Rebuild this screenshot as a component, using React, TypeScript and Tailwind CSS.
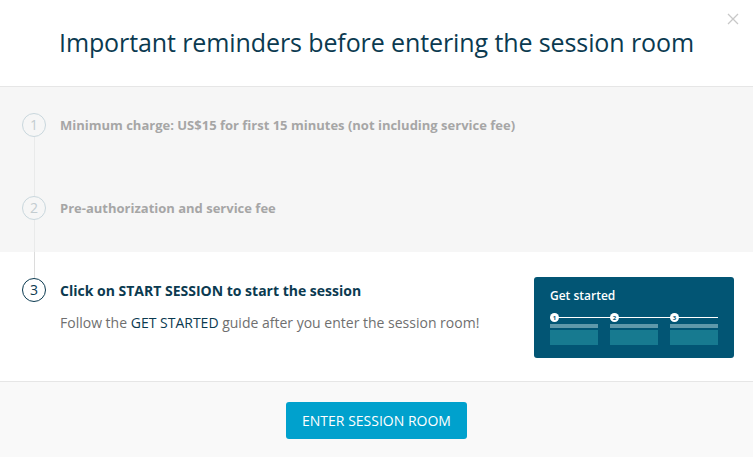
import React from "react";

const font = { fontFamily: '"Open Sans", "Noto Sans", sans-serif' };

function StepCircle({ n, active }: { n: number; active?: boolean }) {
  return (
    <div
      className={
        "flex h-[24px] w-[24px] shrink-0 items-center justify-center rounded-full border text-[14px] leading-none " +
        (active
          ? "border-[#0b3a50] text-[#0b3a50]"
          : "border-[#c9d7dd] text-[#c3ccd0]")
      }
    >
      {n}
    </div>
  );
}

function GuideCard() {
  return (
    <div className="w-[200px] rounded-[3px] bg-[#025574] px-[16px] pt-[10px] pb-[13px]">
      <div className="text-[12px] font-semibold text-white">Get started</div>
      <div className="relative mt-[8px] flex gap-[12px]">
        <div className="absolute left-[4px] right-0 top-[4px] h-px bg-white" />
        {[1, 2, 3].map((n) => (
          <div key={n} className="relative w-[48px]">
            <div className="flex h-[9px] w-[9px] items-center justify-center rounded-full bg-white text-[6px] font-bold leading-none text-[#025574]">
              {n}
            </div>
            <div className="mt-[2px] h-[4px] bg-[#5f98aa]" />
            <div className="mt-[2px] h-[15px] bg-[#177a90]" />
          </div>
        ))}
      </div>
    </div>
  );
}

export default function App() {
  return (
    <div className="h-[457px] w-[753px] bg-white" style={font}>
      <div className="relative flex h-[87px] items-center justify-center border-b border-[#e6e6e6]">
        <h1 className="pb-[1px] text-[25px] tracking-[-0.1px] text-[#0b3a50]">
          Important reminders before entering the session room
        </h1>
        <svg
          className="absolute right-[14px] top-[13px]"
          width="12"
          height="12"
          viewBox="0 0 12 12"
        >
          <path d="M1 1L11 11M11 1L1 11" stroke="#c8c8c8" strokeWidth="1.3" />
        </svg>
      </div>

      <div className="bg-[#f6f6f6] pl-[22px] pt-[26px]">
        <div className="flex h-[83px]">
          <div className="flex w-[24px] flex-col items-center">
            <StepCircle n={1} />
            <div className="w-px flex-1 bg-[#e9eaea]" />
          </div>
          <div className="ml-[14px] mt-[3px] text-[13px] font-bold text-[#a6a6a6]">
            Minimum charge: US$15 for first 15 minutes (not including service fee)
          </div>
        </div>
        <div className="flex h-[56px]">
          <div className="flex w-[24px] flex-col items-center">
            <StepCircle n={2} />
            <div className="w-px flex-1 bg-[#e9eaea]" />
          </div>
          <div className="ml-[14px] mt-[3px] text-[13px] font-bold text-[#a6a6a6]">
            Pre-authorization and service fee
          </div>
        </div>
      </div>

      <div className="flex h-[129px] pl-[22px] pr-[19px]">
        <div className="flex w-[24px] flex-col items-center">
          <div className="h-[26px] w-px bg-[#dcdcdc]" />
          <StepCircle n={3} active />
        </div>
        <div className="ml-[14px] flex-1 pt-[28px]">
          <div className="text-[14px] font-bold text-[#0b3a50]">
            Click on START SESSION to start the session
          </div>
          <div className="mt-[11px] text-[14px] text-[#6f6f6f]">
            Follow the <span className="text-[#0b3a50]">GET STARTED</span> guide
            after you enter the session room!
          </div>
        </div>
        <div className="pt-[25px]">
          <GuideCard />
        </div>
      </div>

      <div className="flex h-[76px] items-start justify-center border-t border-[#e6e6e6] bg-[#f9f9f9] pt-[20px]">
        <button className="h-[37px] w-[181px] rounded-[3px] bg-[#00a1cd] text-[14px] text-white">
          ENTER SESSION ROOM
        </button>
      </div>
    </div>
  );
}
